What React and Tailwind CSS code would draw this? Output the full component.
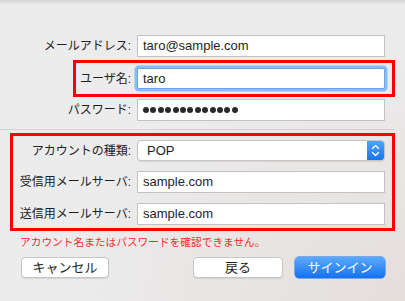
import React from "react";

const FONT = { fontFamily: '"Liberation Sans", "Noto Sans CJK JP", sans-serif' };

function Field({ value, focused = false }) {
  return (
    <div
      className={`flex w-[248px] items-center border bg-white pl-[5px] text-[13px] text-[#1e1e1e] ${
        focused
          ? "h-[21px] rounded-[2px] border-[#6aa6ea] shadow-[0_0_0_2.5px_#86bdf3]"
          : "h-[22px] border-[#c2c2c2]"
      }`}
    >
      {value}
    </div>
  );
}

function Row({ label, labelWidth, children, className = "" }) {
  return (
    <div className={`flex items-center gap-[6px] ${className}`}>
      <div className="shrink-0 text-right text-[12px] text-[#222]" style={{ width: labelWidth }}>
        {label}
      </div>
      {children}
    </div>
  );
}

function PasswordDots({ count = 13 }) {
  return (
    <div className="flex h-[22px] w-[248px] items-center gap-[1.4px] border border-[#c2c2c2] bg-white pl-[5px]">
      {Array.from({ length: count }).map((_, i) => (
        <div key={i} className="h-[6px] w-[6px] rounded-full bg-[#2a2a2a]" />
      ))}
    </div>
  );
}

function SelectBox({ value }) {
  return (
    <div className="flex h-[21px] w-[248px] items-stretch overflow-hidden rounded-[4px] border border-[#c4c4c4] bg-white shadow-[0_1px_1px_rgba(0,0,0,0.08)]">
      <div className="flex flex-1 items-center pl-[9px] text-[13px] text-[#1e1e1e]">{value}</div>
      <div className="flex w-[17px] flex-col items-center justify-center bg-gradient-to-b from-[#4ea4fb] to-[#1575f2]">
        <svg width="9" height="13" viewBox="0 0 9 13" fill="none" stroke="#fff" strokeWidth="1.4" strokeLinecap="round" strokeLinejoin="round">
          <path d="M1.5 4.5 L4.5 1.5 L7.5 4.5" />
          <path d="M1.5 8.5 L4.5 11.5 L7.5 8.5" />
        </svg>
      </div>
    </div>
  );
}

function Button({ children, primary = false, className = "" }) {
  return (
    <button
      type="button"
      className={`flex h-[21px] items-center justify-center rounded-[4px] text-[13px] ${
        primary
          ? "bg-gradient-to-b from-[#5aaafc] to-[#1270f1] text-white shadow-[0_0_0_0.5px_#1a6fe0]"
          : "border border-[#c6c6c6] bg-white text-[#1e1e1e] shadow-[0_1px_1px_rgba(0,0,0,0.1)]"
      } ${className}`}
    >
      {children}
    </button>
  );
}

export default function App() {
  return (
    <div
      className="relative h-[301px] w-[405px] overflow-hidden bg-[#ececec] bg-[radial-gradient(ellipse_at_100%_100%,#e4dedb_0%,#ececec_60%)]"
      style={FONT}
    >
      <div className="absolute inset-x-0 top-0 h-[5px] bg-gradient-to-b from-[#d4d4d4] to-transparent" />

      <div className="flex flex-col pt-[35px]">
        <Row label="メールアドレス:" labelWidth={131}>
          <Field value="taro@sample.com" />
        </Row>

        <div className="ml-[73px] mt-[3px] w-[322px] border-[3px] border-[#ff0000] pb-[5px] pt-[5px]">
          <Row label="ユーザ名:" labelWidth={55}>
            <Field value="taro" focused />
          </Row>
        </div>

        <Row label="パスワード:" labelWidth={131} className="mt-[2px]">
          <PasswordDots />
        </Row>

        <div className="mr-[10px] mt-[8px] h-px bg-[#d2d2d2]" />

        <div className="ml-[10px] mt-[3px] flex w-[385px] flex-col border-[3px] border-[#ff0000] pb-[3px] pt-[4px]">
          <Row label="アカウントの種類:" labelWidth={118}>
            <SelectBox value="POP" />
          </Row>
          <Row label="受信用メールサーバ:" labelWidth={118} className="mt-[10px]">
            <Field value="sample.com" />
          </Row>
          <Row label="送信用メールサーバ:" labelWidth={118} className="mt-[10px]">
            <Field value="sample.com" />
          </Row>
        </div>

        <div className="ml-[20px] mt-[3px] text-[10.7px] leading-[16px] text-[#ff2a2a]">
          アカウント名またはパスワードを確認できません。
        </div>

        <div className="ml-[21px] mt-[7px] flex items-center">
          <Button className="w-[88px]">キャンセル</Button>
          <Button className="ml-[84px] w-[90px]">戻る</Button>
          <Button primary className="ml-[12px] w-[90px]">サインイン</Button>
        </div>
      </div>
    </div>
  );
}
